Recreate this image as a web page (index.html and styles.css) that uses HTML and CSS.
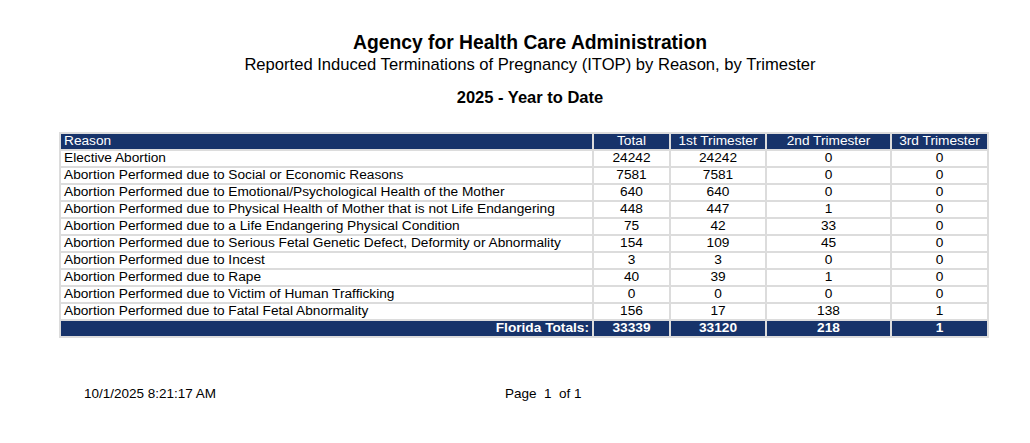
FILE: index.html
```html
<!DOCTYPE html>
<html>
<head>
<meta charset="utf-8">
<link rel="stylesheet" href="styles.css">
</head>
<body>
<div class="page">
  <header class="head">
    <h1 class="title">Agency for Health Care Administration</h1>
    <p class="subtitle">Reported Induced Terminations of Pregnancy (ITOP) by Reason, by Trimester</p>
    <h2 class="period">2025 - Year to Date</h2>
  </header>
  <table class="report">
    <colgroup>
      <col class="c-reason"><col class="c-total"><col class="c-t1"><col class="c-t2"><col class="c-t3">
    </colgroup>
    <thead>
      <tr><th class="left">Reason</th><th>Total</th><th>1st Trimester</th><th>2nd Trimester</th><th>3rd Trimester</th></tr>
    </thead>
    <tbody>
      <tr><td class="left">Elective Abortion</td><td>24242</td><td>24242</td><td>0</td><td>0</td></tr>
      <tr><td class="left">Abortion Performed due to Social or Economic Reasons</td><td>7581</td><td>7581</td><td>0</td><td>0</td></tr>
      <tr><td class="left">Abortion Performed due to Emotional/Psychological Health of the Mother</td><td>640</td><td>640</td><td>0</td><td>0</td></tr>
      <tr><td class="left">Abortion Performed due to Physical Health of Mother that is not Life Endangering</td><td>448</td><td>447</td><td>1</td><td>0</td></tr>
      <tr><td class="left">Abortion Performed due to a Life Endangering Physical Condition</td><td>75</td><td>42</td><td>33</td><td>0</td></tr>
      <tr><td class="left">Abortion Performed due to Serious Fetal Genetic Defect, Deformity or Abnormality</td><td>154</td><td>109</td><td>45</td><td>0</td></tr>
      <tr><td class="left">Abortion Performed due to Incest</td><td>3</td><td>3</td><td>0</td><td>0</td></tr>
      <tr><td class="left">Abortion Performed due to Rape</td><td>40</td><td>39</td><td>1</td><td>0</td></tr>
      <tr><td class="left">Abortion Performed due to Victim of Human Trafficking</td><td>0</td><td>0</td><td>0</td><td>0</td></tr>
      <tr><td class="left">Abortion Performed due to Fatal Fetal Abnormality</td><td>156</td><td>17</td><td>138</td><td>1</td></tr>
    </tbody>
    <tfoot>
      <tr><td class="right">Florida Totals:</td><td>33339</td><td>33120</td><td>218</td><td>1</td></tr>
    </tfoot>
  </table>
  <footer class="foot">
    <span class="stamp">10/1/2025 8:21:17 AM</span>
    <span class="pageno">Page&nbsp; 1&nbsp; of 1</span>
  </footer>
</div>
</body>
</html>
```

FILE: styles.css
```css
html, body {
  margin: 0;
  padding: 0;
  background: #ffffff;
}
body {
  font-family: "Liberation Sans", Arial, sans-serif;
  color: #000;
}
.page {
  padding: 31px 0 0 59px;
  width: 942px;
}
.head {
  text-align: center;
}
.title {
  margin: 0;
  font-size: 19.3px;
  font-weight: bold;
  line-height: 24px;
}
.subtitle {
  margin: 0;
  font-size: 16.6px;
  line-height: 20px;
}
.period {
  margin: 13px 0 0;
  font-size: 16.5px;
  font-weight: bold;
  line-height: 18px;
}
.report {
  margin-top: 26px;
  width: 928px;
  border-collapse: collapse;
  table-layout: fixed;
  font-size: 13.7px;
  border: 1px solid #dcdcdc;
}
.c-reason { width: 533px; }
.c-total { width: 77px; }
.c-t1 { width: 96px; }
.c-t2 { width: 125px; }
.c-t3 { width: 97px; }
.report th, .report td {
  border: 2px solid #dcdcdc;
  padding: 0 3px;
  height: 15px;
  line-height: 14.8px;
  text-align: center;
  white-space: nowrap;
  font-weight: normal;
}
.report thead th {
  background: #17336a;
  color: #ffffff;
}
.report .left {
  text-align: left;
}
.report tfoot td {
  background: #17336a;
  color: #ffffff;
  font-weight: bold;
}
.report tfoot .right {
  text-align: right;
}
.foot {
  margin-top: 48px;
  display: flex;
  font-size: 13.5px;
  padding-left: 25px;
}
.stamp {
  width: 421px;
}
```
